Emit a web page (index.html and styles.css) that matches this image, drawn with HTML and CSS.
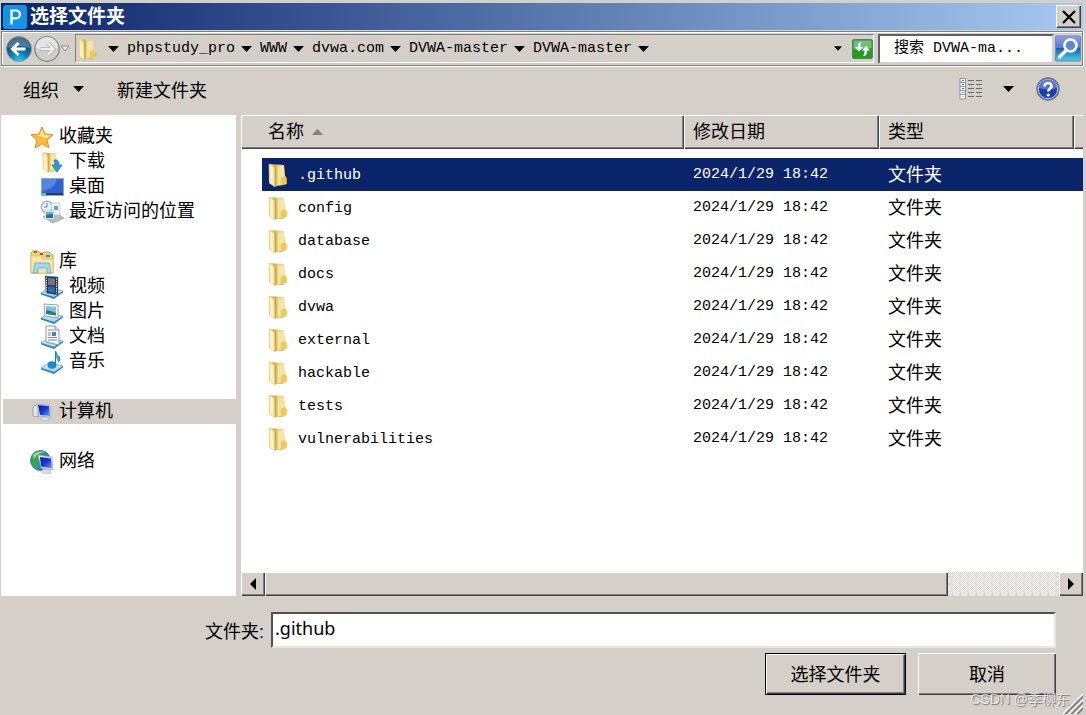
FILE: index.html
```html
<!DOCTYPE html>
<html lang="zh-CN">
<head>
  <meta charset="UTF-8" />
  <meta name="viewport" content="width=device-width, initial-scale=1.0"/>
  <title>选择文件夹</title>
  <link rel="stylesheet" href="styles.css">
</head>

<body>
  <!-- shared icons -->
  <svg class="icon-defs" aria-hidden="true">
    <defs>
      <linearGradient id="gold" x1="0" x2="1" y1="0" y2="0"><stop offset="0" stop-color="#f6e9a8"/><stop offset=".35" stop-color="#c9ac55"/><stop offset=".5" stop-color="#e9d27c"/><stop offset="1" stop-color="#f3dc80"/></linearGradient>
      <linearGradient id="flap" x1="0" x2="1" y1="0" y2="0"><stop offset="0" stop-color="#f3e2a0"/><stop offset=".5" stop-color="#fff8cf"/><stop offset="1" stop-color="#ecd586"/></linearGradient>
      <linearGradient id="shade" x1="0" x2="1" y1="0" y2="0"><stop offset="0" stop-color="#555" stop-opacity=".6"/><stop offset="1" stop-color="#555" stop-opacity="0"/></linearGradient>
      <linearGradient id="tray" x1="0" x2="0" y1="0" y2="1"><stop offset="0" stop-color="#eaf6fc"/><stop offset="1" stop-color="#8dc8e8"/></linearGradient>
      <linearGradient id="screen" x1="0" x2="1" y1="0" y2="1"><stop offset="0" stop-color="#0a1fa0"/><stop offset=".5" stop-color="#1438d8"/><stop offset="1" stop-color="#6fa4f4"/></linearGradient>
    </defs>
    <symbol id="folder" viewBox="0 0 24 26">
      <path d="M15 18l7-2-2 4-5 4h-6z" fill="url(#shade)"/>
      <path d="M1 2l15 1 1 11 1.500 2v6L7 24.500 1 21z" fill="url(#gold)"/>
      <path d="M10 5l6-1 .5 10-4 2v6.500l-2.500.5z" fill="#f7e9ae" opacity=".8"/>
      <path d="M13 16l4-2 1.500 2v6l-5.500 1.500z" fill="#ecca55"/>
      <path d="M1 2l5.500 3.500L7 25l-5.500-4z" fill="url(#flap)" stroke="#e0c46c" stroke-width=".6"/>
      <path d="M7.500 6v18" stroke="#b9994a" stroke-width=".8" opacity=".7"/>
    </symbol>
    <symbol id="down" viewBox="0 0 11 6"><path d="M0 0h11L5.500 6z"/></symbol>
    <symbol id="tray-base" viewBox="0 0 24 24">
      <path d="M1 18l8-5 14 3-9 7z" fill="url(#tray)" stroke="#4aa3d2" stroke-width=".7"/>
      <path d="M1 18l13 4 9-6v1.500L14 24 1 19.500z" fill="#2586bd"/>
    </symbol>
  </svg>

  <div class="dialog">
    <header class="title-bar">
      <svg class="app-icon" viewBox="0 0 24 24"><rect width="24" height="24" rx="3" fill="#1592e6"/><path d="M8.500 19.500V5.500H13a3.700 3.700 0 0 1 0 7.800H8.500" fill="none" stroke="#fff" stroke-width="2.200"/></svg>
      <h1>选择文件夹</h1>
      <button class="close raised" aria-label="关闭"><svg viewBox="0 0 14 14"><path d="M1 1l12 12M13 1L1 13" stroke="#000" stroke-width="2.200"/></svg></button>
    </header>

    <nav class="nav-bar">
      <div class="history">
        <button aria-label="后退"><svg viewBox="0 0 28 28">
          <defs><radialGradient id="blue" cx=".5" cy="1" r=".9"><stop offset="0" stop-color="#2ad4ff"/><stop offset=".45" stop-color="#0c78ae"/><stop offset="1" stop-color="#0d3a5e"/></radialGradient></defs>
          <circle cx="14" cy="14" r="12.500" fill="url(#blue)" stroke="#879aa8" stroke-width="1"/>
          <path d="M3 13a11 11 0 0 1 22 0q-11-4-22 0" fill="#fff" opacity=".25"/>
          <path d="M20.500 14H8M13.500 8L7.500 14l6 6" fill="none" stroke="#fff" stroke-width="3"/></svg></button>
        <button aria-label="前进"><svg viewBox="0 0 28 28">
          <circle cx="14" cy="14" r="12.200" fill="#cfcfcd" stroke="#8b8b8b" stroke-width="1.400"/>
          <path d="M3 13a11 11 0 0 1 22 0q-11 4-22 0" fill="#e5e5e4"/>
          <path d="M7.500 14H20M14.500 8l6 6-6 6" fill="none" stroke="#aaa" stroke-width="3.800"/>
          <path d="M7.500 14H20M14.500 8l6 6-6 6" fill="none" stroke="#eee" stroke-width="2.400"/></svg></button>
        <button class="recent" aria-label="最近的页面"><svg viewBox="0 0 10 7"><path d="M1 1h8L5 6z" fill="#eee" stroke="#888"/></svg></button>
      </div>
      <div class="address">
        <svg class="address-folder"><use href="#folder"/></svg>
        <svg class="arrow"><use href="#down"/></svg>
        <a href="#">phpstudy_pro</a><svg class="arrow"><use href="#down"/></svg>
        <a href="#">WWW</a><svg class="arrow"><use href="#down"/></svg>
        <a href="#">dvwa.com</a><svg class="arrow"><use href="#down"/></svg>
        <a href="#">DVWA-master</a><svg class="arrow"><use href="#down"/></svg>
        <a href="#">DVWA-master</a><svg class="arrow"><use href="#down"/></svg>
        <button class="address-drop" aria-label="以前的位置"><svg><use href="#down"/></svg></button>
        <button class="refresh" aria-label="刷新"><svg viewBox="0 0 21 20">
          <rect x=".5" y=".5" width="20" height="19" rx="1.500" fill="#1f9e1f" stroke="#5d7d62"/>
          <path d="M1.500 1.500h18V9q-9 3-18 1z" fill="#6cc07a"/>
          <path d="M9.500 3Q6 3 6 6.500V8H3l4 4.500L11 8H8.500V6.500Q8.500 5 9.500 3zM11 17q4 0 4-4v-1.500h3L14 7l-4 4.500h2.500V13q0 2-1.500 4z" fill="#fff"/></svg></button>
      </div>
      <input class="search-box" type="text" aria-label="搜索" placeholder="搜索 DVWA-ma...">
      <button class="search-button" aria-label="搜索"><svg viewBox="0 0 26 26">
        <defs><linearGradient id="sea" x1="0" x2="0" y1="0" y2="1"><stop offset="0" stop-color="#8ca0ec"/><stop offset=".48" stop-color="#5579cf"/><stop offset=".5" stop-color="#1c60b4"/><stop offset="1" stop-color="#41d2e8"/></linearGradient></defs>
        <rect x=".5" y=".5" width="25" height="25" rx="1" fill="url(#sea)" stroke="#6d87b8"/>
        <path d="M11 15l-6.500 6.500" stroke="#fff" stroke-width="3.500" stroke-linecap="round"/>
        <circle cx="15.500" cy="10" r="6" fill="#5c8ad8" stroke="#fff" stroke-width="2.600"/></svg></button>
    </nav>

    <div class="toolbar">
      <button>组织 <svg class="arrow"><use href="#down"/></svg></button>
      <button>新建文件夹</button>
      <button class="views" aria-label="更改您的视图">
        <svg viewBox="0 0 24 22">
          <path d="M1 .5h5.500v20.500H1z" fill="#fff" stroke="#8793a3"/>
          <path d="M1 4.500h5M1 8.500h5M1 12.500h5M1 16.500h5" stroke="#8793a3"/>
          <path d="M3 2.500h2" stroke="#3ba54a"/><path d="M3 6.500h2" stroke="#d33"/><path d="M3 10.500h2" stroke="#27c"/><path d="M3 14.500h2" stroke="#7a4"/><path d="M3 18.500h2" stroke="#dc3"/>
          <path d="M9 2.500h6m2 0h6M9 6.500h6m2 0h6M9 10.500h6m2 0h6M9 14.500h6m2 0h6M9 18.500h6m2 0h6" stroke="#626c7a"/></svg>
      </button>
      <button class="views-drop" aria-label="更多选项"><svg class="arrow"><use href="#down"/></svg></button>
      <button class="help" aria-label="获取帮助"><svg viewBox="0 0 24 24">
        <circle cx="12" cy="12" r="11" fill="#1d3fa6" stroke="#6c7690" stroke-width="1.500"/>
        <circle cx="12" cy="12" r="9.700" fill="none" stroke="#c3d2f2" stroke-width="1"/>
        <path d="M3 11a9 9 0 0 1 18 0q-8 3-18 0" fill="#6f8fdc" opacity=".7"/>
        <path d="M8.500 9.500c0-5 7.500-4.500 7 0-.3 2.300-3.300 2.300-3.300 5" fill="none" stroke="#fff" stroke-width="2.600"/><circle cx="12.200" cy="18" r="1.600" fill="#fff"/></svg></button>
    </div>

    <main class="content">
      <aside class="sidebar">
        <ul>
          <li><svg viewBox="0 0 24 24"><path d="M12 2l3 7 8 .8-6 5.400 2 7.800-7-4.200L5 23l2-7.800L1 9.800 9 9z" fill="#fdbd3c" stroke="#e28a1b" stroke-linejoin="round"/><path d="M12 4l2 6 7 .6-5 2.400q-5-3-12-2.400L10 10z" fill="#fff0a8"/></svg>收藏夹</li>
          <li class="child"><svg viewBox="0 0 24 24"><use href="#folder" x="2" width="21" height="24"/><path d="M14 10q5-1 5 5h3l-5 7-5-7h3q0-3-1-5z" fill="#249be0" stroke="#1276b5" stroke-width=".7"/></svg>下载</li>
          <li class="child"><svg viewBox="0 0 24 24"><rect x="1.500" y="3.500" width="22" height="17" fill="#2f62d0" stroke="#8fa9c4"/><path d="M2 4h15Q15 14 2 16z" fill="#6fa0ee" opacity=".6"/><path d="M2 18h21v2H2z" fill="#1d3f78"/><path d="M2 18h4v2H2z" fill="#5fd06a"/></svg>桌面</li>
          <li class="child"><svg viewBox="0 0 24 24"><path d="M3 17l12-5 9 6-11 5z" fill="#b5bec6" stroke="#8a949c" stroke-width=".6"/><circle cx="7" cy="7" r="5.700" fill="#e7eff5" stroke="#a4b1bb" stroke-width="1.400"/><path d="M7 3v4H4" stroke="#6a7c8a" fill="none"/><path d="M11 3h9v12h-8z" fill="#edf5fb" stroke="#aebbc6" stroke-width=".7"/><path d="M14 6h4v4h-4z" fill="#54a5df"/><path d="M5 11h9v8H5z" fill="#fff" stroke="#9cb0bf" stroke-width=".6"/><path d="M6 12h7v3H6z" fill="#55b5e8"/><path d="M6 15l7-1v4H6z" fill="#26737c"/></svg>最近访问的位置</li>
        </ul>
        <ul>
          <li><svg viewBox="0 0 24 24"><path d="M1 3l2-2h5l2 2h3l1-1h5l2 2 2 1v18H1z" fill="#f0d27a" stroke="#c9a448"/><path d="M1 6h10l2 3h10v14H1z" fill="#f8e6a4" stroke="#d9b75c" stroke-width=".6"/><path d="M4 2h3" stroke="#3a9b3c" stroke-width="2"/><path d="M10 4h3" stroke="#d93a21" stroke-width="2"/><path d="M16 6h4" stroke="#2d8cdb" stroke-width="2"/><path d="M5 13h14l2 10h-4v-5H8v5H3z" fill="#a4d8f0" stroke="#5aa9cf" stroke-width=".8"/></svg>库</li>
          <li class="child"><svg viewBox="0 0 24 24"><use href="#tray-base"/><path d="M5 1l13 1v18L6 18z" fill="#26364a" stroke="#666" stroke-width=".5"/><path d="M8 3l7 .5v7L8 10z" fill="#3d7fc2"/><path d="M8 11.500l7 .5v6l-7-1z" fill="#2a69b0"/><path d="M9 7l5-3v4l-4 2z" fill="#d65930"/><path d="M6.500 2.500v15M16.500 3.500v15" stroke="#fff" stroke-dasharray="1.200 1.200"/></svg>视频</li>
          <li class="child"><svg viewBox="0 0 24 24"><use href="#tray-base"/><path d="M4 4l14 1v13L5 16z" fill="#fff" stroke="#9a9fa8"/><path d="M6 6l10 .7v8.800L6 14z" fill="#7bc0ea"/><path d="M6 10q5 1 10 3v2.500L6 14z" fill="#2e7d6e"/></svg>图片</li>
          <li class="child"><svg viewBox="0 0 24 24"><use href="#tray-base"/><path d="M6 1h9l4 4v15L6 17z" fill="#f8f8fb" stroke="#8e96a5"/><path d="M15 1v4h4" fill="#dfe6ef" stroke="#8e96a5"/><path d="M8 5h6M8 8h3M8 10h3M8 12.500h9M8 15h9" stroke="#8b86b5"/><path d="M12 7h4v4h-4z" fill="#3b87c8"/></svg>文档</li>
          <li class="child"><svg viewBox="0 0 24 24"><use href="#tray-base"/><ellipse cx="12" cy="15" rx="4.500" ry="3.700" fill="#1f87cd"/><path d="M15.500 15V1q1 4 4 6 1 3-1 5 0-4-3-5" fill="#46b4e8" stroke="#1c7fbd" stroke-width="1"/></svg>音乐</li>
        </ul>
        <ul>
          <li class="active"><svg viewBox="0 0 24 24"><path d="M3 7l5-3v13l-5-1z" fill="#e3e5e6" stroke="#8b9197" stroke-width=".7"/><path d="M7 4l13 1 1 12-12-1z" fill="#e9edf1" stroke="#9aa2aa" stroke-width=".7"/><path d="M8 5l11 1 1 10-10-1z" fill="url(#screen)"/><path d="M12 17h5l2 3-6 1-3-2z" fill="#d8dde0" stroke="#9da4a9" stroke-width=".5"/></svg>计算机</li>
        </ul>
        <ul>
          <li><svg viewBox="0 0 24 24"><circle cx="10.500" cy="10.500" r="10" fill="#2b80cf" stroke="#185a9f" stroke-width=".7"/><path d="M8 1q-7 2-7 9 2 7 6 9 3-3 0-6l3-4-2-3 5-1 2-4z" fill="#39a844"/><path d="M3 5q5-5 12-3Q7 3 4 9z" fill="#fff" opacity=".5"/><path d="M8 5l14 2 1 13-12-2z" fill="#e9edf1" stroke="#9aa2aa" stroke-width=".7"/><path d="M10 7l11 1.500 1 10-11-2z" fill="url(#screen)"/><path d="M13 19l7 1 1 3-6 1-4-2z" fill="#d8dde0" stroke="#9da4a9" stroke-width=".5"/></svg>网络</li>
        </ul>
      </aside>

      <section class="files">
        <table class="file-table">
          <colgroup><col class="col-gutter"><col class="col-name"><col class="col-date"><col class="col-type"><col></colgroup>
          <thead>
            <tr>
              <th class="raised name-head" colspan="2">名称<svg class="sort" viewBox="0 0 11 6"><path d="M0 6h11L5.500 0z" fill="#808080"/></svg></th>
              <th class="raised">修改日期</th>
              <th class="raised">类型</th>
              <th class="rest"></th>
            </tr>
          </thead>
          <tbody>
            <tr class="selected"><td></td><td><svg><use href="#folder"/></svg>.github</td><td>2024/1/29 18:42</td><td class="type">文件夹</td><td></td></tr>
            <tr><td></td><td><svg><use href="#folder"/></svg>config</td><td>2024/1/29 18:42</td><td class="type">文件夹</td><td></td></tr>
            <tr><td></td><td><svg><use href="#folder"/></svg>database</td><td>2024/1/29 18:42</td><td class="type">文件夹</td><td></td></tr>
            <tr><td></td><td><svg><use href="#folder"/></svg>docs</td><td>2024/1/29 18:42</td><td class="type">文件夹</td><td></td></tr>
            <tr><td></td><td><svg><use href="#folder"/></svg>dvwa</td><td>2024/1/29 18:42</td><td class="type">文件夹</td><td></td></tr>
            <tr><td></td><td><svg><use href="#folder"/></svg>external</td><td>2024/1/29 18:42</td><td class="type">文件夹</td><td></td></tr>
            <tr><td></td><td><svg><use href="#folder"/></svg>hackable</td><td>2024/1/29 18:42</td><td class="type">文件夹</td><td></td></tr>
            <tr><td></td><td><svg><use href="#folder"/></svg>tests</td><td>2024/1/29 18:42</td><td class="type">文件夹</td><td></td></tr>
            <tr><td></td><td><svg><use href="#folder"/></svg>vulnerabilities</td><td>2024/1/29 18:42</td><td class="type">文件夹</td><td></td></tr>
          </tbody>
        </table>
        <div class="scrollbar">
          <button class="raised" aria-label="向左滚动"><svg viewBox="0 0 6 12"><path d="M6 0v12L0 6z"/></svg></button>
          <div class="track"><div class="thumb raised"></div></div>
          <button class="raised" aria-label="向右滚动"><svg viewBox="0 0 6 12"><path d="M0 0v12l6-6z"/></svg></button>
        </div>
      </section>
    </main>

    <footer class="footer">
      <div class="folder-row">
        <label for="folderInput">文件夹:</label>
        <input type="text" id="folderInput" value=".github">
      </div>
      <div class="buttons">
        <button class="default">选择文件夹</button>
        <button class="raised">取消</button>
      </div>
      <svg class="grip" viewBox="0 0 20 20"><path d="M2 20L20 2M8 20L20 8M14 20l6-6" stroke="#808080" stroke-width="2.500"/><path d="M0 20L20 0M6 20L20 6M12 20l8-8" stroke="#fff" stroke-width="1.400"/></svg>
      <span class="watermark">CSDN @季柳东</span>
    </footer>
  </div>
</body>
</html>
```

FILE: styles.css
```css
* {
  box-sizing: border-box;
}

body {
  margin: 0;
  background-color: #d4cfc8;
  color: #000;
  font-family: "Liberation Sans", "Noto Sans CJK SC", sans-serif;
  font-size: 18px;
}

button {
  margin: 0;
  padding: 0;
  border: none;
  background: none;
  color: inherit;
  font: inherit;
}

svg {
  display: block;
  flex: none;
}

.icon-defs {
  position: absolute;
  width: 0;
  height: 0;
}

.dialog {
  display: flex;
  flex-direction: column;
  min-height: 100vh;
  padding: 3px 3px 0 1px;
}

/* classic 3d edge */
.raised {
  background-color: #d4cfc8;
  box-shadow: inset 1px 1px #fff, inset -1px -1px #404040, inset -2px -2px #808080;
}

.arrow {
  width: 11px;
  height: 6px;
}

/* title bar */
.title-bar {
  display: flex;
  align-items: center;
  height: 27px;
  padding: 0 2px;
  background: linear-gradient(to right, #0a246a, #a6caf0);
  color: #fff;
}

.app-icon {
  width: 24px;
  height: 24px;
}

.title-bar h1 {
  flex: 1;
  margin: 0 0 0 3px;
  font-size: 19px;
  line-height: 27px;
}

.close {
  display: grid;
  place-items: center;
  width: 25px;
  height: 23px;
}

.close svg {
  width: 14px;
  height: 14px;
}

/* navigation */
.nav-bar {
  display: flex;
  align-items: center;
  height: 35px;
  margin-top: 1px;
  padding: 0 1px 0 3px;
  border: 1px solid #808080;
  box-shadow: inset 1px 1px #fff, 0 1px #fff, 1px 0 #fff;
}

.history {
  display: flex;
  align-items: center;
  width: 70px;
}

.history button svg {
  width: 28px;
  height: 28px;
}

.history .recent {
  margin-left: -1px;
}

.history .recent svg {
  width: 10px;
  height: 7px;
}

.address {
  display: flex;
  flex: 1;
  align-items: center;
  height: 29px;
  padding-left: 2px;
  border-style: solid;
  border-width: 1px;
  border-color: #808080 #fff #fff #808080;
  font-family: "Liberation Mono", monospace;
  font-size: 15px;
}

.address-folder {
  width: 22px;
  height: 24px;
  margin-right: 8px;
}

.address a {
  margin: 0 6px 0 8px;
  color: inherit;
  text-decoration: none;
}

.address-drop {
  margin-left: auto;
}

.address-drop svg {
  width: 8px;
  height: 5px;
}

.refresh {
  margin-left: 10px;
}

.refresh svg {
  width: 21px;
  height: 20px;
}

.search-box {
  width: 176px;
  height: 30px;
  margin: 0 1px 0 4px;
  padding: 0 14px;
  border: 2px solid;
  border-color: #606060 #d4cfc8 #d4cfc8 #606060;
  background-color: #fff;
  font-family: "Liberation Mono", "Noto Sans CJK SC", monospace;
  font-size: 15px;
}

.search-box::placeholder {
  color: #000;
  opacity: 1;
}

.search-button svg {
  width: 26px;
  height: 27px;
}

/* toolbar */
.toolbar {
  display: flex;
  align-items: center;
  height: 49px;
  padding: 0 23px 3px 22px;
}

.toolbar button {
  display: flex;
  align-items: center;
  gap: 14px;
  margin-right: 33px;
}

.toolbar .views {
  margin: 0 20px 0 auto;
}

.views svg {
  width: 24px;
  height: 22px;
}

.toolbar .views-drop {
  margin-right: 22px;
}

.toolbar .help {
  margin-right: 0;
}

.help svg {
  width: 24px;
  height: 24px;
}

/* folder tree and file list */
.content {
  display: flex;
  flex: 1;
  gap: 5px;
}

.sidebar {
  width: 235px;
  padding-top: 9px;
  background-color: #fff;
}

.sidebar ul {
  margin: 0 0 25px;
  padding: 0 0 0 2px;
  list-style: none;
}

.sidebar li {
  display: flex;
  align-items: center;
  gap: 5px;
  height: 25px;
  padding-left: 27px;
  line-height: 25px;
}

.sidebar .child {
  padding-left: 37px;
}

.sidebar .active {
  background-color: #d4cfc8;
}

.sidebar svg {
  width: 24px;
  height: 24px;
}

.files {
  display: flex;
  flex: 1;
  flex-direction: column;
  justify-content: space-between;
  min-width: 0;
  background-color: #fff;
}

.file-table {
  width: 100%;
  border-collapse: collapse;
  table-layout: fixed;
}

.col-gutter {
  width: 21px;
}

.col-name {
  width: 422px;
}

.col-date,
.col-type {
  width: 195px;
}

.file-table th {
  height: 34px;
  padding: 0 9px;
  font-weight: normal;
  line-height: 32px;
  text-align: left;
}

.file-table .name-head {
  padding-left: 27px;
}

.file-table .rest {
  padding: 0;
  background-color: #d4cfc8;
  box-shadow: inset 1px 1px #fff, inset 0 -1px #404040, inset 0 -2px #808080;
}

.sort {
  display: inline-block;
  width: 11px;
  height: 6px;
  margin-left: 8px;
  vertical-align: 3px;
}

.file-table tbody::before {
  display: block;
  height: 9px;
  content: "";
}

.file-table td {
  height: 33px;
  padding: 0 9px;
  font-family: "Liberation Mono", monospace;
  font-size: 15px;
}

.file-table td:first-child,
.file-table td:last-child {
  padding: 0;
}

.file-table td:nth-child(2) {
  padding-left: 6px;
}

.file-table td svg {
  display: inline-block;
  width: 24px;
  height: 26px;
  margin-right: 6px;
  vertical-align: middle;
}

.file-table .type {
  padding-bottom: 4px;
  font-family: "Noto Sans CJK SC", sans-serif;
  font-size: 18px;
  line-height: 26px;
}

.selected td:not(:first-child) {
  background-color: #0a246a;
  color: #fff;
}

.scrollbar {
  display: flex;
  height: 24px;
}

.scrollbar button {
  display: grid;
  place-items: center;
  width: 24px;
}

.scrollbar button svg {
  width: 6px;
  height: 12px;
}

.track {
  flex: 1;
  background: repeating-conic-gradient(#d4cfc8 0 25%, #fff 0 50%) 0 0 / 2px 2px;
}

.thumb {
  width: 86%;
  height: 100%;
}

/* footer */
.footer {
  position: relative;
  padding: 16px 27px 20px 204px;
}

.folder-row {
  display: flex;
  align-items: center;
}

.folder-row label {
  width: 66px;
}

.folder-row input {
  flex: 1;
  min-width: 0;
  height: 36px;
  padding: 0 2px 4px;
  border: 2px solid;
  border-color: #505050 #e8e6e2 #e8e6e2 #505050;
  background-color: #fff;
  font-family: "Noto Sans", sans-serif;
  font-size: 18px;
}

.buttons {
  display: flex;
  justify-content: flex-end;
  gap: 12px;
  margin-top: 5px;
}

.buttons button {
  width: 138px;
  height: 42px;
  padding-bottom: 3px;
}

.buttons .default {
  width: 141px;
  border: 1px solid #000;
  box-shadow: inset 1px 1px #fff, inset -1px -1px #404040, inset -2px -2px #808080;
}

.grip {
  position: absolute;
  right: 0;
  bottom: 1px;
  width: 20px;
  height: 20px;
}

.watermark {
  position: absolute;
  right: 13px;
  bottom: 4px;
  color: rgba(255, 255, 255, 0.7);
  font-size: 14px;
  line-height: 24px;
  text-shadow: 1px 1px 1px #777;
}
```
